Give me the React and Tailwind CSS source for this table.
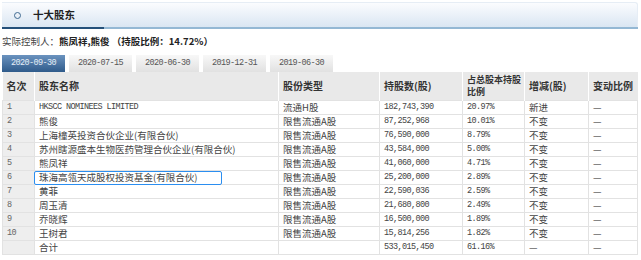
import React from 'react';

const tabs = ['2020-09-30', '2020-07-15', '2020-06-30', '2019-12-31', '2019-06-30'];

const rows = [
  ['1', 'HKSCC NOMINEES LIMITED', '流通H股', '182,743,390', '20.97%', '新进', '—'],
  ['2', '熊俊', '限售流通A股', '87,252,968', '10.01%', '不变', '—'],
  ['3', '上海橦英投资合伙企业(有限合伙)', '限售流通A股', '76,590,000', '8.79%', '不变', '—'],
  ['4', '苏州瞎源盛本生物医药管理合伙企业(有限合伙)', '限售流通A股', '43,584,000', '5.00%', '不变', '—'],
  ['5', '熊凤祥', '限售流通A股', '41,060,000', '4.71%', '不变', '—'],
  ['6', '珠海高瓴天成股权投资基金(有限合伙)', '限售流通A股', '25,200,000', '2.89%', '不变', '—'],
  ['7', '黄菲', '限售流通A股', '22,590,036', '2.59%', '不变', '—'],
  ['8', '周玉清', '限售流通A股', '21,680,800', '2.49%', '不变', '—'],
  ['9', '乔晓辉', '限售流通A股', '16,500,000', '1.89%', '不变', '—'],
  ['10', '王树君', '限售流通A股', '15,814,256', '1.82%', '不变', '—'],
  ['', '合计', '', '533,015,450', '61.16%', '—', '—'],
];

const cjk = { fontFamily: '"Noto Sans CJK SC", "Noto Sans", sans-serif' };
const mono = 'font-["Liberation_Mono",monospace] text-[8.5px] tracking-[-0.6px]';

const isLatin = (s) => /^[0-9A-Za-z ,.%-]+$/.test(s);

export default function App() {
  return (
    <div className="w-[641px] h-[260px] bg-white overflow-hidden pl-[2px] pt-[2px] text-[#333]" style={cjk}>
      {/* title bar */}
      <div className="w-[636px] h-[25px] flex items-center rounded-tr-[3px] border-t border-r border-[#e6edf5] bg-gradient-to-b from-[#fbfcfe] to-[#dae6f2]">
        <div className="shrink-0 w-[12px]" />
        <div className="shrink-0 w-[7px] h-[7px] rounded-full border-[1.5px] border-[#3f6a91]" />
        <div className="shrink-0 w-[12px]" />
        <div className="shrink-0 text-[10.5px] font-bold text-[#222] leading-none">十大股东</div>
      </div>
      <div className="flex w-[636px] h-[2px]">
        <div className="w-[102px] bg-[#24507a]" />
        <div className="flex-1 bg-[#94b8d4]" />
      </div>

      <div className="mt-[6px] h-[14px] flex items-center text-[9.5px] leading-none">
        <span className="text-[#444]">实际控制人：</span>
        <span className="font-bold text-[#222]">熊凤祥,熊俊 （持股比例：14.72%）</span>
      </div>

      {/* date tabs */}
      <div className="mt-[6px] h-[17px] flex gap-[4px]">
        {tabs.map((t, i) => (
          <div
            key={t}
            className={
              'w-[63px] h-full flex items-center justify-center ' + mono + ' ' +
              (i === 0
                ? 'bg-gradient-to-b from-[#6b93bf] to-[#2f5b8b] text-[#e6eef7]'
                : 'bg-gradient-to-b from-[#f8f8f8] to-[#e1e1e1] text-[#555]')
            }
          >
            {t}
          </div>
        ))}
      </div>

      <table className="table-fixed border-collapse w-[635px]">
        <colgroup>
          <col className="w-[32px]" />
          <col className="w-[244px]" />
          <col className="w-[101px]" />
          <col className="w-[83px]" />
          <col className="w-[62px]" />
          <col className="w-[64px]" />
          <col className="w-[49px]" />
        </colgroup>
        <thead>
          <tr className="bg-[#e9e9e9] text-[10px] font-bold text-[#333]">
            <th className="h-[28px] p-0 text-left font-bold pl-[4px] border-r border-white">名次</th>
            <th className="h-[28px] p-0 text-left font-bold pl-[4px] border-r border-white">股东名称</th>
            <th className="h-[28px] p-0 text-left font-bold pl-[4px] border-r border-white">股份类型</th>
            <th className="h-[28px] p-0 text-left font-bold pl-[4px] border-r border-white">持股数(股)</th>
            <th className="h-[28px] p-0 text-left font-bold pl-[4px] border-r border-white leading-[12px] whitespace-nowrap text-[9px]">
              占总股本持股<br />比例
            </th>
            <th className="h-[28px] p-0 text-left font-bold pl-[4px] border-r border-white">增减(股)</th>
            <th className="h-[28px] p-0 text-left font-bold pl-[4px]">变动比例</th>
          </tr>
        </thead>
        <tbody>
          {rows.map((r, ri) => (
            <tr key={ri}>
              {r.map((c, ci) => (
                <td
                  key={ci}
                  className={
                    'h-[14px] p-0 pl-[4px] leading-[10px] border border-[#e2e2e2] whitespace-nowrap ' +
                    (ci === 0 ? 'bg-[#eeeeee] text-[#666] ' : 'text-[#444] ') +
                    (isLatin(c) ? mono : 'text-[9.5px]')
                  }
                >
                  {ri === 5 && ci === 1 ? (
                    <div className="relative">
                      <span className="absolute left-[-5px] top-[-1px] w-[188px] h-[14px] rounded-[2px] border-[1.5px] border-[#2b8ef0]" />
                      {c}
                    </div>
                  ) : (
                    c
                  )}
                </td>
              ))}
            </tr>
          ))}
        </tbody>
      </table>
    </div>
  );
}
